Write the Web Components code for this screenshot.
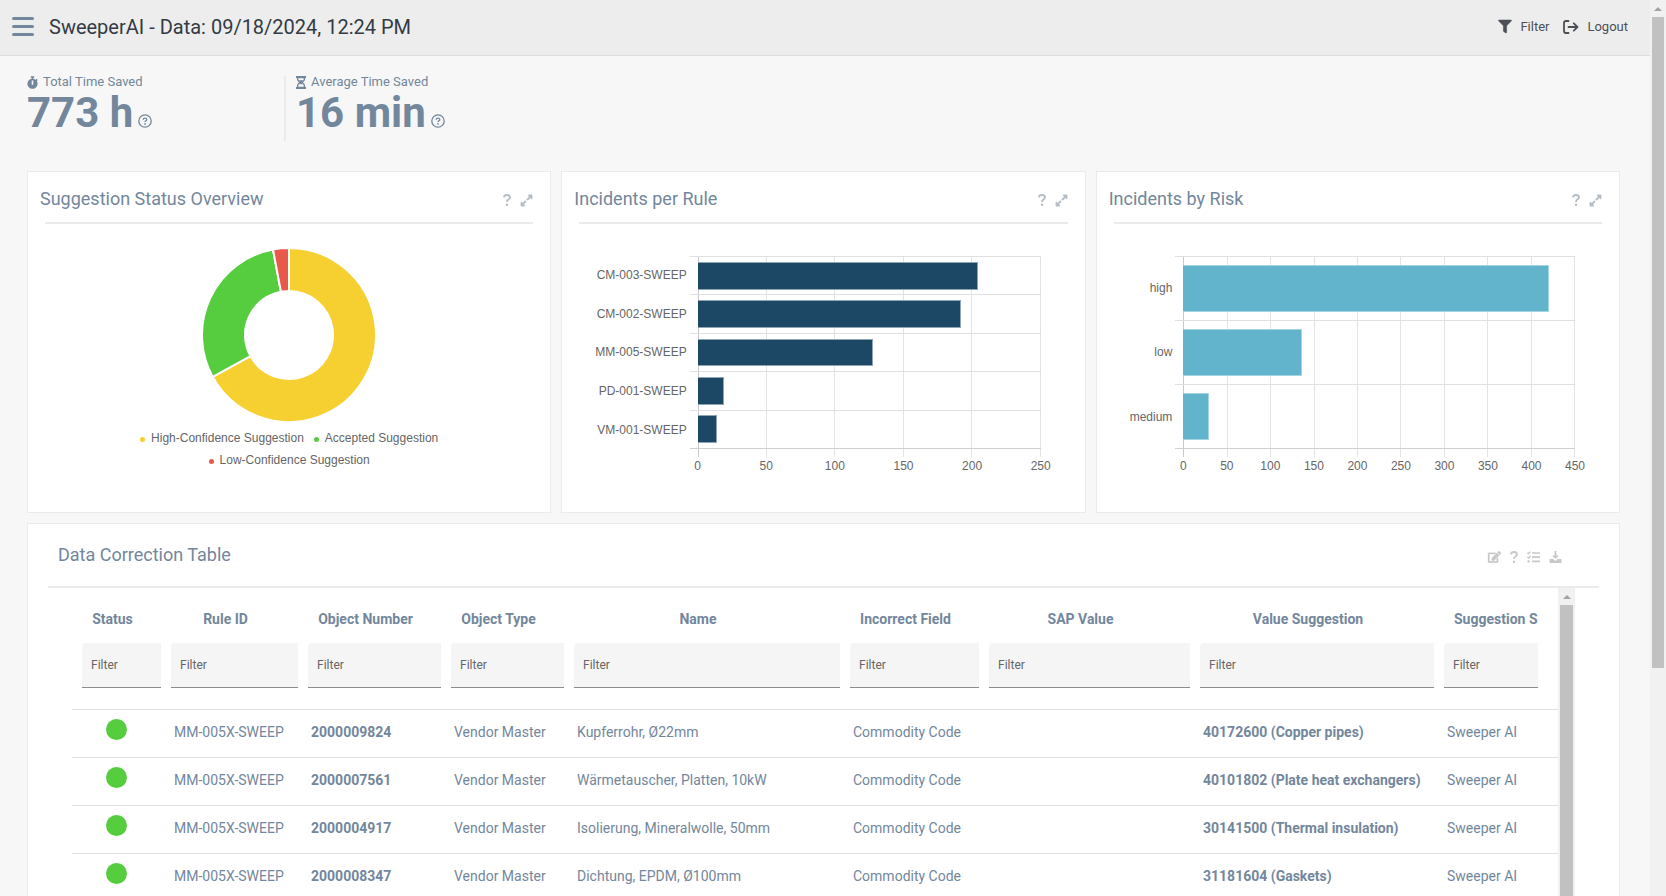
<!DOCTYPE html>
<html lang="en">
<head>
<meta charset="utf-8">
<meta name="viewport" content="width=device-width, initial-scale=1">
<title>SweeperAI</title>
<style>
  body { margin: 0; font-family: Roboto, sans-serif; color: #73879c; background: #f7f7f7; }
</style>
</head>
<body>
<sweep-app>
  <app-header slot="header">SweeperAI - Data: 09/18/2024, 12:24 PM</app-header>
  <kpi-tile slot="kpi" icon="stopwatch" label="Total Time Saved">773 h</kpi-tile>
  <kpi-tile slot="kpi" icon="hourglass" label="Average Time Saved" divided>16 min</kpi-tile>
  <chart-card slot="chart" heading="Suggestion Status Overview"><donut-chart></donut-chart></chart-card>
  <chart-card slot="chart" heading="Incidents per Rule">
    <bar-chart max="250" color="#1d4865" edge="#8fa5b4"
      data='[["CM-003-SWEEP",204],["CM-002-SWEEP",192],["MM-005-SWEEP",128],["PD-001-SWEEP",19],["VM-001-SWEEP",14]]'></bar-chart>
  </chart-card>
  <chart-card slot="chart" heading="Incidents by Risk">
    <bar-chart max="450" color="#61b4cb" edge="#a5d4e1"
      data='[["high",420],["low",136],["medium",30]]'></bar-chart>
  </chart-card>
  <correction-table slot="table"></correction-table>
</sweep-app>

<script>
const ICONS = {
  menu: ['0 0 22 19', '<path d="M1.5 1.5h19M1.5 9.5h19M1.5 17.5h19" stroke="currentColor" stroke-width="3" stroke-linecap="round"/>'],
  filter: ['0 0 512 512', '<path stroke="currentColor" stroke-width="20" d="M487.976 0H24.028C2.71 0-8.047 25.866 7.058 40.971L192 225.941V432c0 7.831 3.821 15.17 10.237 19.662l80 55.98C298.02 518.69 320 507.493 320 487.98V225.941l184.947-184.97C520.021 25.896 509.338 0 487.976 0z"/>'],
  logout: ['0 0 16 14', '<path d="M5.5 1H3Q1 1 1 3v8q0 2 2 2h2.500M5.500 7h8.500M10.800 3.300L14.500 7l-3.700 3.700" fill="none" stroke="currentColor" stroke-width="1.800" stroke-linecap="round" stroke-linejoin="round"/>'],
  stopwatch: ['0 0 448 512', '<path d="M432 304c0 114.9-93.1 208-208 208S16 418.900 16 304c0-104 76.300-190.200 176-205.500V64h-28c-6.600 0-12-5.400-12-12V12c0-6.600 5.400-12 12-12h120c6.600 0 12 5.400 12 12v40c0 6.600-5.400 12-12 12h-28v34.500c37.500 5.800 71.700 21.600 99.700 44.600l27.500-27.500c4.700-4.700 12.300-4.700 17 0l28.300 28.300c4.700 4.700 4.700 12.300 0 17l-29.400 29.400-.6.6C419.700 223.300 432 262.200 432 304zm-176 36V188.500c0-6.600-5.400-12-12-12h-40c-6.600 0-12 5.400-12 12V340c0 6.600 5.400 12 12 12h40c6.600 0 12-5.400 12-12z"/>'],
  hourglass: ['0 0 10 13', '<path d="M0 0h10v2H0zM0 11h10v2H0z"/><path d="M1.600 1.500v1.700Q1.600 5 4 6.500 1.600 8 1.600 9.800v1.700h6.800V9.800Q8.400 8 6 6.500 8.400 5 8.400 3.200V1.500z" fill="none" stroke="currentColor" stroke-width="1.400"/><path d="M2.500 4.200h5L5.600 6.500 7 8.500 5 8 3 8.500l1.400-2z"/>'],
  help: ['0 0 14 14', '<circle cx="7" cy="7" r="6.200" fill="none" stroke="currentColor" stroke-width="1.300"/><path d="M5.200 5.700Q5.300 4.200 7 4.200T8.800 5.600Q8.800 6.400 7.800 6.900 7 7.300 7 8.100" fill="none" stroke="currentColor" stroke-width="1.300"/><circle cx="7" cy="9.900" r=".85"/>'],
  question: ['0 0 8 12', '<path d="M1 3.300Q1.200 1 4 1t3 2.300Q7 4.700 5.400 5.500 4 6.200 4 7.900" fill="none" stroke="currentColor" stroke-width="1.900"/><circle cx="4" cy="10.700" r="1.200"/>'],
  expand: ['0 0 448 512', '<path stroke="currentColor" stroke-width="16" d="M212.686 315.314L120 408l32.922 31.029c15.120 15.120 4.412 40.971-16.970 40.971h-112C10.697 480 0 469.255 0 456V344c0-21.382 25.803-32.090 40.922-16.971L72 360l92.686-92.686c6.248-6.248 16.379-6.248 22.627 0l25.373 25.373c6.249 6.248 6.249 16.378 0 22.627zm22.628-118.628L328 104l-32.922-31.029C279.958 57.851 290.666 32 312.048 32h112C437.303 32 448 42.745 448 56v112c0 21.382-25.803 32.090-40.922 16.971L376 152l-92.686 92.686c-6.248 6.248-16.379 6.248-22.627 0l-25.373-25.373c-6.249-6.248-6.249-16.378 0-22.627z"/>'],
  edit: ['0 0 576 512', '<path stroke="currentColor" stroke-width="14" d="M402.600 83.200l90.200 90.200c3.800 3.800 3.800 10 0 13.800L274.400 405.600l-92.800 10.300c-12.400 1.400-22.900-9.100-21.500-21.500l10.300-92.800L388.800 83.200c3.800-3.800 10-3.800 13.800 0zm162-22.900l-48.800-48.800c-15.200-15.200-39.900-15.200-55.200 0l-35.400 35.400c-3.800 3.800-3.800 10 0 13.800l90.200 90.200c3.800 3.800 10 3.800 13.800 0l35.400-35.400c15.200-15.300 15.200-40 0-55.200zM384 346.200V448H64V128h229.800c3.200 0 6.200-1.300 8.500-3.500l40-40c7.600-7.600 2.200-20.500-8.500-20.500H48C21.500 64 0 85.500 0 112v352c0 26.500 21.500 48 48 48h352c26.500 0 48-21.500 48-48V306.200c0-10.700-12.900-16-20.500-8.500l-40 40c-2.200 2.300-3.500 5.300-3.500 8.500z"/>'],
  tasks: ['0 0 13 12', '<path d="M5 2h8M5 6.200h8M5 10.400h8" stroke="currentColor" stroke-width="1.700"/><path d="M.4 1.800l1.100 1L3.500.6M.4 6l1.100 1 2-2.200" fill="none" stroke="currentColor" stroke-width="1.300"/><circle cx="1.600" cy="10.400" r="1.200"/>'],
  download: ['0 0 13 13', '<path d="M5.500 0h2v4.800h2.700L6.500 8.600 2.800 4.800h2.700z"/><path d="M.6 8.800h3.600l2.300 2 2.300-2h3.600q.6 0 .6.600v3q0 .6-.6.6H.6Q0 13 0 12.400v-3q0-.6.600-.6z"/>']
};

class Base extends HTMLElement {
  render(html) { this.attachShadow({ mode: 'open' }).innerHTML = html; }
}

customElements.define('ui-icon', class extends Base {
  connectedCallback() {
    if (this.shadowRoot) return;
    const [box, body] = ICONS[this.getAttribute('name')];
    this.render(`<style>:host{display:block;width:13px;height:13px;flex:none}
      svg{display:block;width:100%;height:100%;overflow:visible}</style>
      <svg viewBox="${box}" fill="currentColor" aria-hidden="true">${body}</svg>`);
  }
});

customElements.define('scroll-track', class extends Base {
  connectedCallback() {
    if (this.shadowRoot) return;
    this.render(`<style>
      :host{display:flex;flex-direction:column;background:#f1f1f1}
      .up{flex:none;height:17px;display:flex;align-items:center;justify-content:center}
      .up i{border:4px solid transparent;border-top:0;border-bottom-color:#a3a3a3}
      .thumb{flex:20;margin:0 2px;background:#c1c1c1}
      .rest{flex:var(--rest,0)}
    </style><div class="up"><i></i></div><div class="thumb"></div><div class="rest"></div>`);
  }
});

customElements.define('sweep-app', class extends Base {
  connectedCallback() {
    this.render(`<style>
      :host{display:flex;height:100vh}
      .page{flex:1;min-width:0;overflow:auto;scrollbar-width:none}
      main{padding:20px 30px 40px 27px}
      .kpis{display:flex;margin-bottom:30px}
      .charts{display:grid;grid-template-columns:repeat(3,minmax(0,1fr));gap:10px;margin-bottom:10px}
      scroll-track{flex:none;width:16px;--rest:7}
    </style>
    <div class="page">
      <slot name="header"></slot>
      <main>
        <div class="kpis"><slot name="kpi"></slot></div>
        <div class="charts"><slot name="chart"></slot></div>
        <slot name="table"></slot>
      </main>
    </div>
    <scroll-track></scroll-track>`);
  }
});

customElements.define('app-header', class extends Base {
  connectedCallback() {
    this.render(`<style>
      :host{display:flex;align-items:center;height:53px;padding:0 22px 2px 12px;background:#ededed;border-bottom:1px solid #ddd}
      button{display:flex;align-items:center;border:0;padding:0;background:none;font:13px/20px Roboto,sans-serif;color:#4c4f55;cursor:pointer}
      .menu{color:#73879c}
      .menu ui-icon{width:22px;height:19px}
      h1{margin:0 auto 0 15px;font:400 20px/24px Roboto,sans-serif;color:#333b44}
      .action{gap:8px;margin-left:14px}
      .action ui-icon{width:14px;height:13px}
      .action .out{width:16px;height:14px}
    </style>
    <button class="menu" aria-label="Menu"><ui-icon name="menu"></ui-icon></button>
    <h1><slot></slot></h1>
    <button class="action"><ui-icon name="filter"></ui-icon>Filter</button>
    <button class="action"><ui-icon class="out" name="logout"></ui-icon>Logout</button>`);
  }
});

customElements.define('kpi-tile', class extends Base {
  connectedCallback() {
    this.render(`<style>
      :host{display:block;width:257px;height:65px;box-sizing:border-box}
      :host([divided]){border-left:2px solid #ebebeb;padding-left:10px}
      .label{display:flex;align-items:center;gap:5px;padding-bottom:2px;font-size:13px;line-height:12px;height:12px}
      .label ui-icon{width:11px}
      :host([divided]) .label ui-icon{width:10px}
      .value{display:flex;align-items:flex-end;gap:5px;font-size:42px;font-weight:700;line-height:46px}
      button{border:0;padding:0;margin-bottom:8px;background:none;color:inherit}
      button ui-icon{width:14px;height:14px}
    </style>
    <div class="label"><ui-icon name="${this.getAttribute('icon')}"></ui-icon>${this.getAttribute('label')}</div>
    <div class="value"><span><slot></slot></span><button aria-label="Help"><ui-icon name="help"></ui-icon></button></div>`);
  }
});

customElements.define('chart-card', class extends Base {
  connectedCallback() {
    this.render(`<style>
      :host{display:block;box-sizing:border-box;min-height:342px;background:#fff;border:1px solid #ebebeb}
      header{display:flex;align-items:center;gap:9px;height:46px;padding:4px 17px 0 12px}
      h2{flex:1;margin:0;font:400 18px/24px Roboto,sans-serif}
      button{display:flex;border:0;padding:0;margin-top:2px;background:none;color:#b4bcc5}
      .q{width:8px;height:12px}
      hr{margin:0 17px;border:0;height:2px;background:#ebebeb}
    </style>
    <header><h2>${this.getAttribute('heading')}</h2>
      <button aria-label="Help"><ui-icon class="q" name="question"></ui-icon></button>
      <button aria-label="Expand"><ui-icon name="expand"></ui-icon></button></header>
    <hr><slot></slot>`);
  }
});

customElements.define('donut-chart', class extends Base {
  connectedCallback() {
    const slices = [
      ['High-Confidence Suggestion', '#f6d030', 0, 241.3],
      ['Accepted Suggestion', '#55cd3e', 241.3, 349.4],
      ['Low-Confidence Suggestion', '#e9594b', 349.4, 360]
    ];
    const at = (r, deg) => {
      const a = (deg - 90) * Math.PI / 180;
      return `${(88 + r * Math.cos(a)).toFixed(2)} ${(88 + r * Math.sin(a)).toFixed(2)}`;
    };
    const paths = slices.map(([, c, a, b]) => {
      const big = b - a > 180 ? 1 : 0;
      return `<path fill="${c}" d="M${at(87, a)}A87 87 0 ${big} 1 ${at(87, b)}L${at(44, b)}A44 44 0 ${big} 0 ${at(44, a)}Z"/>`;
    }).join('');
    this.render(`<style>
      :host{display:block;padding-top:23px}
      svg{display:block;width:176px;height:176px;margin:0 auto}
      path{stroke:#fff;stroke-width:2;stroke-linejoin:round}
      ul{display:flex;flex-wrap:wrap;justify-content:center;column-gap:10px;max-width:340px;margin:4px auto 0;padding:0;list-style:none;font:12px/22px "Liberation Sans",sans-serif;color:#666}
      li{display:flex;align-items:center;gap:6px}
      i{width:5px;height:5px;border-radius:50%;margin-top:2px}
    </style>
    <svg viewBox="0 0 176 176" role="img" aria-label="Suggestion status">${paths}</svg>
    <ul>${slices.map(([t, c]) => `<li><i style="background:${c}"></i>${t}</li>`).join('')}</ul>`);
  }
});

customElements.define('bar-chart', class extends Base {
  connectedCallback() {
    const data = JSON.parse(this.getAttribute('data'));
    const max = +this.getAttribute('max');
    const n = max / 50;
    const ticks = Array.from({ length: n + 1 }, (_, i) => `<span>${i * 50}</span>`).join('');
    this.render(`<style>
      :host{display:grid;grid-template-columns:auto minmax(0,1fr);grid-template-rows:193px auto;column-gap:11px;padding:32px 44px 0 33px;font:12px/16px "Liberation Sans",sans-serif;color:#666}
      .names,.rows{display:grid;grid-auto-rows:minmax(0,1fr)}
      .names span{display:flex;align-items:center;justify-content:flex-end}
      .plot{display:grid}
      .plot>*{grid-area:1/1}
      .cols{display:grid;grid-auto-flow:column;grid-auto-columns:minmax(0,1fr);margin-bottom:-8px;border-right:1px solid #e4e4e4}
      .cols i{border-left:1px solid #e4e4e4}
      .cols i:first-child{border-color:#c8c8c8}
      .rows{margin-left:-8px;border-bottom:1px solid #d0d0d0}
      .rows div{display:flex;align-items:center;padding-left:8px;border-top:1px solid #e0e0e0}
      .rows b{height:74%;box-sizing:border-box;border:1px solid ${this.getAttribute('edge')};border-left:0;background:${this.getAttribute('color')}}
      .ticks{grid-column:2;display:flex;justify-content:space-between;padding-top:9px}
      .ticks span{width:0;display:flex;justify-content:center}
    </style>
    <div class="names">${data.map(d => `<span>${d[0]}</span>`).join('')}</div>
    <div class="plot">
      <div class="cols">${'<i></i>'.repeat(n)}</div>
      <div class="rows">${data.map(d => `<div><b style="width:${d[1] / max * 100}%"></b></div>`).join('')}</div>
    </div>
    <div class="ticks">${ticks}</div>`);
  }
});

customElements.define('correction-table', class extends Base {
  connectedCallback() {
    const cols = [['Status', 94], ['Rule ID', 137], ['Object Number', 143], ['Object Type', 123], ['Name', 0],
      ['Incorrect Field', 139], ['SAP Value', 211], ['Value Suggestion', 244], ['Suggestion S', 119]];
    const rows = [
      ['2000009824', 'Kupferrohr, Ø22mm', '40172600 (Copper pipes)'],
      ['2000007561', 'Wärmetauscher, Platten, 10kW', '40101802 (Plate heat exchangers)'],
      ['2000004917', 'Isolierung, Mineralwolle, 50mm', '30141500 (Thermal insulation)'],
      ['2000008347', 'Dichtung, EPDM, Ø100mm', '31181604 (Gaskets)']
    ];
    this.render(`<style>
      :host{display:block;background:#fff;border:1px solid #ebebeb;padding:0 20px 40px 20px}
      header{display:flex;align-items:center;gap:9px;height:62px;padding:0 37px 0 10px}
      h2{flex:1;margin:0;font:400 18px/24px Roboto,sans-serif}
      button{display:flex;border:0;padding:0;margin-top:4px;background:none;color:#c8c8c8}
      button ui-icon{height:12px}
      .q{width:8px}
      hr{margin:0;border:0;height:2px;background:#ebebeb}
      .scroller{display:flex;margin:0 24px}
      table{flex:1;width:0;min-width:0;table-layout:fixed;border-collapse:collapse;font-size:14px;line-height:20px}
      th{height:55px;box-sizing:border-box;padding:6px 23px 0 5px;font-weight:700;text-align:center;white-space:nowrap}
      th:first-child{padding-left:10px}
      th:last-child{padding:6px 20px 0 15px;text-align:left}
      thead td{padding:0 5px 21px}
      thead td:first-child{padding-left:10px}
      thead td:last-child{padding-right:20px}
      input{display:block;box-sizing:border-box;width:100%;height:45px;border:0;border-bottom:1px solid #8c8c8c;border-radius:4px 0 0 0;padding:0 9px;background:#f5f5f5;font:12px/16px Roboto,sans-serif;color:#666}
      input::placeholder{color:#666;opacity:1}
      tbody td{height:48px;box-sizing:border-box;padding:0 0 4px 8px;border-top:1px solid #e0e0e0;white-space:nowrap}
      tbody td:first-child{padding:0 5px 9px 0}
      .dot{display:block;width:21px;height:21px;margin:0 auto;border-radius:50%;background:#55cd3e}
      scroll-track{flex:none;width:17px}
    </style>
    <header><h2>Data Correction Table</h2>
      <button aria-label="Edit"><ui-icon name="edit"></ui-icon></button>
      <button aria-label="Help"><ui-icon class="q" name="question"></ui-icon></button>
      <button aria-label="Tasks"><ui-icon name="tasks"></ui-icon></button>
      <button aria-label="Download"><ui-icon name="download"></ui-icon></button></header>
    <hr>
    <div class="scroller">
      <table>
        <colgroup>${cols.map(c => c[1] ? `<col style="width:${c[1]}px">` : '<col>').join('')}</colgroup>
        <thead>
          <tr>${cols.map(c => `<th scope="col">${c[0]}</th>`).join('')}</tr>
          <tr>${cols.map(c => `<td><input type="text" placeholder="Filter" aria-label="Filter ${c[0]}"></td>`).join('')}</tr>
        </thead>
        <tbody>${rows.map(r => `<tr><td><span class="dot"></span></td><td>MM-005X-SWEEP</td><td><b>${r[0]}</b></td>
          <td>Vendor Master</td><td>${r[1]}</td><td>Commodity Code</td><td></td><td><b>${r[2]}</b></td><td>Sweeper AI</td></tr>`).join('')}</tbody>
      </table>
      <scroll-track></scroll-track>
    </div>`);
  }
});
</script>
</body>
</html>
